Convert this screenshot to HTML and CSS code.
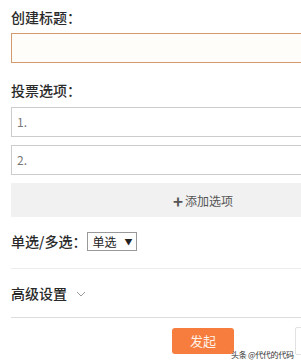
FILE: index.html
```html
<!DOCTYPE html>
<html lang="zh">
<head>
<meta charset="utf-8">
<link rel="stylesheet" href="styles.css">
</head>
<body>
<div class="form">
  <div class="label first">创建标题：</div>
  <div class="input title-input"></div>
  <div class="label second">投票选项：</div>
  <div class="input option">1.</div>
  <div class="input option gap">2.</div>
  <div class="add"><span class="plus">+</span>添加选项</div>
  <div class="row select-row">
    <span class="row-label">单选/多选：</span>
    <span class="select">单选<span class="arrow">▼</span></span>
  </div>
  <div class="divider light"></div>
  <div class="row adv-row">
    <span class="row-label">高级设置</span>
    <svg class="chev" width="10" height="6" viewBox="0 0 10 6"><path d="M1 1 L5 5 L9 1" fill="none" stroke="#999" stroke-width="1"/></svg>
  </div>
  <div class="divider"></div>
  <div class="actions"><span class="btn">发起</span></div>
</div>
<div class="side-box"></div>
<div class="watermark">头条 @代代的代码</div>
</body>
</html>
```
FILE: styles.css
```css
html, body {
  margin: 0;
  padding: 0;
  overflow: hidden;
  background: #fff;
}
body {
  font-family: "Noto Sans CJK SC", "Noto Sans", sans-serif;
  color: #333;
  width: 301px;
  height: 364px;
  position: relative;
}
.form {
  width: 384px;
  margin-left: 11px;
  display: flex;
  flex-direction: column;
}
.label {
  font-size: 14px;
  line-height: 20px;
  height: 20px;
  color: #2a2a2a;
  font-weight: 500;
}
.label.first { margin-top: 7px; }
.label.second { margin-top: 17px; }
.input {
  box-sizing: border-box;
  height: 30px;
  border: 1px solid #ccc;
  background: #fff;
}
.title-input {
  margin-top: 6px;
  border-color: #d29a6e;
  background: #fffdf9;
}
.option {
  margin-top: 7px;
  font-size: 12px;
  line-height: 28px;
  padding-left: 5px;
  color: #777;
}
.option.gap { margin-top: 8px; }
.add {
  margin-top: 8px;
  height: 34px;
  background: #f1f1f1;
  display: flex;
  align-items: center;
  justify-content: center;
  font-size: 12px;
  color: #555;
}
.plus {
  font-size: 17px;
  font-weight: 700;
  color: #555;
  margin-right: 2px;
  line-height: 1;
}
.row {
  display: flex;
  align-items: center;
  height: 20px;
}
.row-label {
  font-size: 14px;
  line-height: 20px;
  color: #2a2a2a;
  font-weight: 500;
}
.select-row { margin-top: 14px; }
.select {
  box-sizing: border-box;
  width: 50px;
  height: 19px;
  border: 1px solid #999;
  font-size: 12px;
  line-height: 17px;
  padding-left: 4px;
  display: flex;
  align-items: center;
  justify-content: space-between;
  padding-right: 4px;
  color: #222;
  margin-left: 1px;
}
.arrow { font-size: 8px; color: #222; }
.divider {
  height: 1px;
  background: #ddd;
  margin-top: 14px;
}
.divider.light {
  margin-top: 17px;
  background: #ececec;
}
.adv-row { margin-top: 14px; }
.chev { margin-left: 9px; margin-top: 2px; }
.actions {
  margin-top: 10px;
  display: flex;
  justify-content: center;
}
.btn {
  width: 62px;
  height: 26px;
  background: #f67d3e;
  border-radius: 3px;
  color: #fff2e8;
  font-size: 13px;
  line-height: 26px;
  text-align: center;
}
.side-box {
  position: absolute;
  left: 295px;
  top: 327px;
  width: 10px;
  height: 26px;
  border: 1px solid #e2e2e2;
  border-radius: 2px;
}
.watermark {
  position: absolute;
  left: 231px;
  top: 349px;
  font-size: 8px;
  line-height: 11px;
  letter-spacing: -0.3px;
  color: #333;
  text-shadow: 0 0 2px #fff;
  white-space: nowrap;
}
```
